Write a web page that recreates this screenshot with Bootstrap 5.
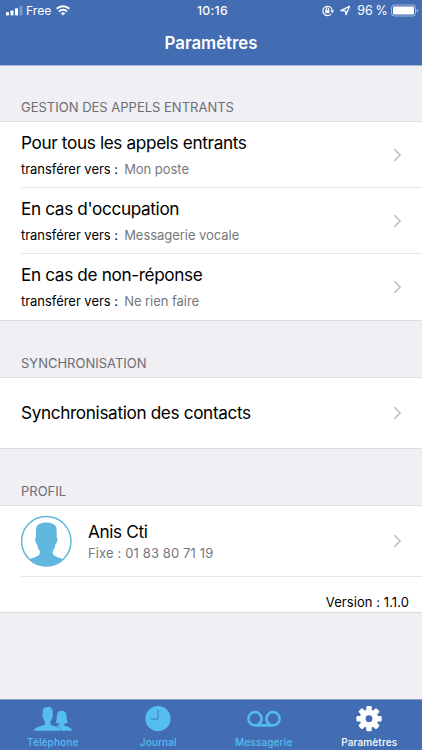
<!DOCTYPE html>
<html lang="fr">
<head>
<meta charset="utf-8">
<meta name="viewport" content="width=device-width, initial-scale=1">
<title>Paramètres</title>
<link href="https://cdn.jsdelivr.net/npm/bootstrap@5.3.0/dist/css/bootstrap.min.css" rel="stylesheet">
<style>
  body { font-family: Inter, "Liberation Sans", sans-serif; background: #efeff4; color: #000; overflow: hidden; }
  svg { flex-shrink: 0; }
  .app-bar, .tab-strip { background: #426db3; color: #fff; }
  .app-bar { height: 66px; border-bottom: 1px solid #a9b9d9; }
  .status-line { height: 22px; font-size: 12.2px; line-height: 22px; }
  .status-side { width: 150px; }
  .carrier { margin-left: 2px; }
  .clock { letter-spacing: .35px; padding-left: 3px; }
  .charge { margin-left: 6px; font-size: 12.4px; letter-spacing: -.1px; word-spacing: -.5px; }
  .page-title { font-size: 16.8px; line-height: 22px; font-weight: 600; padding-top: 10px; margin: 0; }
  .group-label { height: 56px; font-size: 13px; line-height: 18px; color: #6d6d72; padding: 33px 0 0 21px; margin: 0; font-weight: 400; }
  .group-label.first { height: 55px; padding-top: 32px; }
  .group-box { background: #fff; border-top: 1px solid #dcdce1; border-bottom: 1px solid #dcdce1; }
  .cell { margin-left: 21px; padding-right: 20px; height: 66px; color: inherit; text-decoration: none; }
  .cell:first-child { height: 65px; }
  .cell + .cell { border-top: 1px solid #e6e6e8; }
  .cell:nth-child(3) { height: 67px; }
  .cell-text { padding-top: 1px; }
  .cell:nth-child(3) .cell-text { padding-bottom: 1px; }
  .cell.tall { height: 70px; padding-bottom: 1px; }
  .cell.version { height: 36px; padding: 16px 13px 0 0; font-size: 13px; line-height: 18px; letter-spacing: .07px; }
  .cell-title { font-size: 17.2px; line-height: 22px; letter-spacing: -.36px; white-space: nowrap; }
  .cell-sub { font-size: 13px; line-height: 18px; margin-top: 6px; letter-spacing: -.04px; white-space: nowrap; }
  .cell-sub .muted { margin-left: 2.6px; }
  .muted { color: #77777b; }
  .phone { font-size: 13px; line-height: 18px; letter-spacing: .13px; margin-top: 1px; }
  .person { padding-top: 2px; }
  .avatar { margin-right: 15px; }
  .tab-strip { height: 51px; border-top: 1px solid #8c9cc4; }
  .tab-item { flex: 1 1 0; padding-top: 6px; color: #55bdf0; font-size: 10px; line-height: 13px; font-weight: 500; letter-spacing: .14px; text-decoration: none; }
  .tab-item.active { color: #fff; }
  .tab-item svg { margin-bottom: 4px; }
</style>
</head>
<body>
<svg class="d-none">
  <symbol id="chevron" viewBox="0 0 9 14"><path d="M1.300 1.100 7.100 7l-5.800 5.900" fill="none" stroke="#c7c7cc" stroke-width="1.800"/></symbol>
</svg>
<div class="d-flex flex-column vh-100">
  <header class="app-bar flex-shrink-0">
    <div class="status-line d-flex justify-content-between">
      <div class="status-side d-flex align-items-center">
        <svg width="24" height="22" viewBox="0 0 24 22" fill="#fff"><rect x="6" y="12" width="3" height="3.6" rx=".8"/><rect x="10.500" y="10.500" width="3" height="5.100" rx=".8"/><rect x="15" y="8.200" width="3" height="7.400" rx=".8"/><rect x="19.500" y="5.800" width="3" height="9.800" rx=".8" opacity=".3"/></svg>
        <span class="carrier">Free</span>
        <svg class="ms-1" width="16" height="22" viewBox="0 0 16 22" fill="none" stroke="#fff" stroke-width="2"><path d="M1.700 8.700a9 9 0 0 1 12.600 0M4 11.500a5.700 5.700 0 0 1 8 0"/><path d="M8 15.600 5.700 13.300a3.300 3.300 0 0 1 4.600 0z" fill="#fff" stroke="none"/></svg>
      </div>
      <div class="clock fw-medium">10:16</div>
      <div class="status-side d-flex align-items-center justify-content-end">
        <svg width="14" height="22" viewBox="0 0 14 22" fill="none" stroke="#fff" stroke-width="1.100"><path d="M10.200 14a4.700 4.700 0 1 1 1.100-3.400"/><path d="M9.400 10.600h3.800l-1.900 2.600z" fill="#fff" stroke="none"/><rect x="4.300" y="10" width="4.200" height="3.200" fill="#fff" stroke="none"/><path d="M5.200 10V8.900a1.200 1.200 0 0 1 2.400 0V10"/></svg>
        <svg class="ms-1" width="12" height="22" viewBox="0 0 12 22" fill="none" stroke="#fff" stroke-width="1.200" stroke-linejoin="round"><path d="M1.800 10.600 10.500 6.400 7 14.800 6.500 10.900z"/></svg>
        <span class="charge">96 %</span>
        <svg class="ms-1" width="30.500" height="22" viewBox="0 0 30.500 22"><rect x=".5" y="5" width="24" height="11" rx="2.800" fill="none" stroke="#fff" stroke-opacity=".5"/><rect x="2" y="6.500" width="21" height="8" rx="1.200" fill="#fff"/><path d="M25.700 8.700q1.600.8 1.600 1.900t-1.600 1.900z" fill="#fff" opacity=".5"/></svg>
      </div>
    </div>
    <h1 class="page-title text-center">Paramètres</h1>
  </header>

  <main class="flex-grow-1">
    <h2 class="group-label first">GESTION DES APPELS ENTRANTS</h2>
    <section class="group-box">
      <a href="#" class="cell d-flex align-items-center justify-content-between">
        <div class="cell-text"><div class="cell-title">Pour tous les appels entrants</div><div class="cell-sub">transférer vers : <span class="muted">Mon poste</span></div></div>
        <svg width="9" height="14"><use href="#chevron"/></svg>
      </a>
      <a href="#" class="cell d-flex align-items-center justify-content-between">
        <div class="cell-text"><div class="cell-title">En cas d'occupation</div><div class="cell-sub">transférer vers : <span class="muted">Messagerie vocale</span></div></div>
        <svg width="9" height="14"><use href="#chevron"/></svg>
      </a>
      <a href="#" class="cell d-flex align-items-center justify-content-between">
        <div class="cell-text"><div class="cell-title">En cas de non-réponse</div><div class="cell-sub">transférer vers : <span class="muted">Ne rien faire</span></div></div>
        <svg width="9" height="14"><use href="#chevron"/></svg>
      </a>
    </section>

    <h2 class="group-label">SYNCHRONISATION</h2>
    <section class="group-box">
      <a href="#" class="cell tall d-flex align-items-center justify-content-between">
        <div class="cell-title">Synchronisation des contacts</div>
        <svg width="9" height="14"><use href="#chevron"/></svg>
      </a>
    </section>

    <h2 class="group-label">PROFIL</h2>
    <section class="group-box">
      <a href="#" class="cell tall d-flex align-items-center">
        <svg class="avatar" width="52" height="52" viewBox="0 0 52 52">
          <clipPath id="disc"><circle cx="25.300" cy="26.300" r="25"/></clipPath>
          <circle cx="25.300" cy="26.300" r="24.700" fill="#fff" stroke="#62b7de" stroke-width="1.500"/>
          <path clip-path="url(#disc)" d="M25.300 7.500C31.500 7.500 35.300 9.500 35.600 14.500L35.800 22.500C37 23.500 36.500 28 34.600 29C34 32.500 33 34.500 31.800 36C31.600 38.500 31.900 39.500 34 41C37 42.800 42 43.300 45.500 47V52H5V47C8.600 43.300 13.600 42.800 16.600 41C18.700 39.500 19 38.500 18.800 36C17.600 34.500 16.600 32.500 16 29C14.100 28 13.600 23.500 14.800 22.500L15 14.500C15.300 9.500 19.100 7.500 25.300 7.500Z" fill="#62b7de"/>
        </svg>
        <div class="person flex-grow-1"><div class="cell-title">Anis Cti</div><div class="phone muted">Fixe : 01 83 80 71 19</div></div>
        <svg width="9" height="14"><use href="#chevron"/></svg>
      </a>
      <div class="cell version text-end">Version : 1.1.0</div>
    </section>
  </main>

  <nav class="tab-strip d-flex flex-shrink-0">
    <a href="#" class="tab-item d-flex flex-column align-items-center">
      <svg width="40" height="26" viewBox="0 0 40 26" fill="currentColor">
        <path d="M28.700 4.800C31.800 4.800 33.300 6.800 33.500 9.500C33.700 12.500 33.800 14.800 34.800 16.500C33.900 17.300 32.600 17.500 31.200 17.400V19.300C32.500 20.800 38.700 20.800 39 24.800H24V19.800C25.500 19.600 26.200 19.300 26.200 18.500V17.400C24.800 17.500 23.500 17.300 22.600 16.500C23.600 14.800 23.700 12.500 23.900 9.500C24.100 6.800 25.600 4.800 28.700 4.800Z"/>
        <path d="M14.600 1L17 .4L17.300 1.500C19 2 19.900 3.500 19.700 6.500L19.600 8.500C20.300 9.200 20 11.800 18.900 12.300C18.600 14 18 15 17.400 15.800V18.200C19 20.500 27.600 20 28.300 24.800H1C1.700 20 10.300 20.500 11.900 18.200V15.800C11.300 15 10.700 14 10.400 12.300C9.300 11.800 9 9.200 9.700 8.500L9.600 6.500C9.400 3 11 1.300 14.600 1Z" stroke="#426db3" stroke-width="1" paint-order="stroke"/>
      </svg>
      Téléphone
    </a>
    <a href="#" class="tab-item d-flex flex-column align-items-center">
      <svg width="26" height="26" viewBox="0 0 26 26"><circle cx="13" cy="12.700" r="12.600" fill="currentColor"/><path d="M13 3.500v9.700H6" fill="none" stroke="#3a7fb8" stroke-width="1"/></svg>
      Journal
    </a>
    <a href="#" class="tab-item d-flex flex-column align-items-center">
      <svg width="34" height="26" viewBox="0 0 34 26" fill="none" stroke="currentColor" stroke-width="2.500"><circle cx="8" cy="12.700" r="6.600"/><circle cx="26" cy="12.700" r="6.600"/><path d="M8 19.300h18"/></svg>
      Messagerie
    </a>
    <a href="#" class="tab-item active d-flex flex-column align-items-center">
      <svg width="26" height="26" viewBox="-13 -12.700 26 26"><g fill="currentColor"><circle r="9.300"/><g id="teeth"><rect x="-2.700" y="-12.600" width="5.400" height="25.200" rx="1.200"/><rect x="-12.600" y="-2.700" width="25.200" height="5.400" rx="1.200"/></g><use href="#teeth" transform="rotate(45)"/></g><circle r="3.400" fill="#426db3"/></svg>
      Paramètres
    </a>
  </nav>
</div>
<script src="https://cdn.jsdelivr.net/npm/bootstrap@5.3.0/dist/js/bootstrap.bundle.min.js"></script>
</body>
</html>
